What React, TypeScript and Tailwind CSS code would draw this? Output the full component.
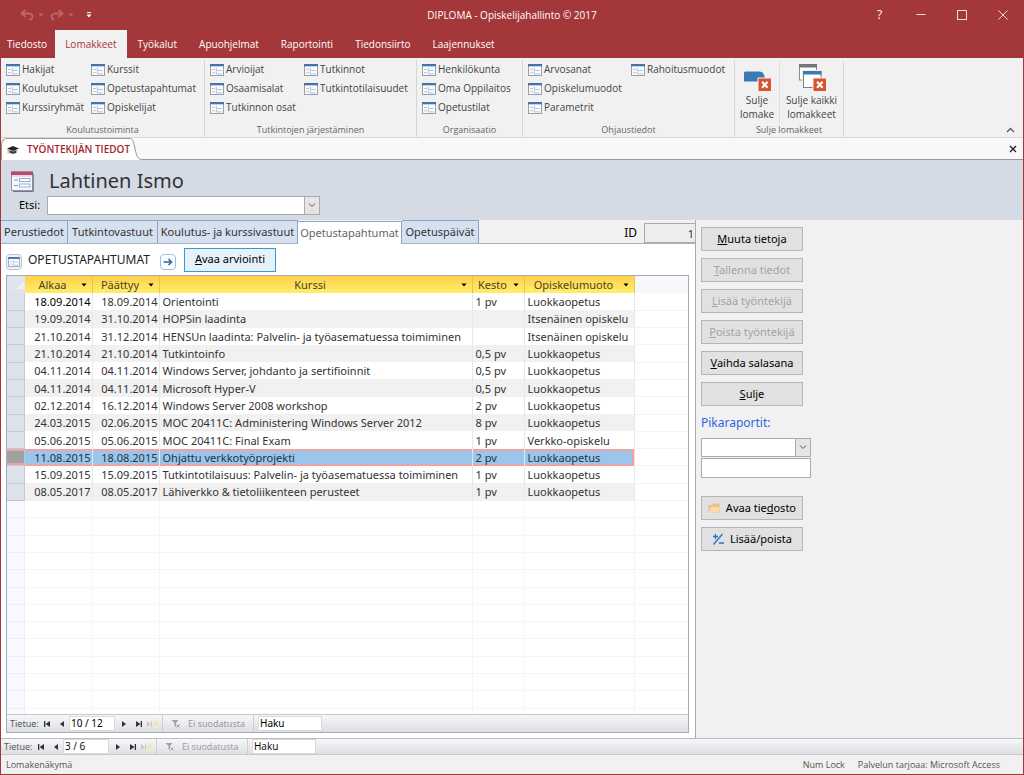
import React, { useState } from "react";
import clsx from "clsx";

///////////////////////////////////////////////////////////////////////////////
///////// Data ///////////////////////////////////////////////////////////////
///////////////////////////////////////////////////////////////////////////////

const menuTabs = [
  "Tiedosto",
  "Lomakkeet",
  "Työkalut",
  "Apuohjelmat",
  "Raportointi",
  "Tiedonsiirto",
  "Laajennukset",
];

type RibbonGroup = {
  label: string;
  width: string;
  columns: { width: string; items: string[] }[];
};

const ribbonGroups: RibbonGroup[] = [
  {
    label: "Koulutustoiminta",
    width: "w-[204px]",
    columns: [
      { width: "w-[85px]", items: ["Hakijat", "Koulutukset", "Kurssiryhmät"] },
      { width: "w-[108px]", items: ["Kurssit", "Opetustapahtumat", "Opiskelijat"] },
    ],
  },
  {
    label: "Tutkintojen järjestäminen",
    width: "w-[212px]",
    columns: [
      { width: "w-[94px]", items: ["Arvioijat", "Osaamisalat", "Tutkinnon osat"] },
      { width: "w-[108px]", items: ["Tutkinnot", "Tutkintotilaisuudet"] },
    ],
  },
  {
    label: "Organisaatio",
    width: "w-[106px]",
    columns: [
      { width: "w-[94px]", items: ["Henkilökunta", "Oma Oppilaitos", "Opetustilat"] },
    ],
  },
  {
    label: "Ohjaustiedot",
    width: "w-[212px]",
    columns: [
      { width: "w-[103px]", items: ["Arvosanat", "Opiskelumuodot", "Parametrit"] },
      { width: "w-[100px]", items: ["Rahoitusmuodot"] },
    ],
  },
];

const formTabs = [
  { label: "Perustiedot", width: "w-[67px]" },
  { label: "Tutkintovastuut", width: "w-[90px]" },
  { label: "Koulutus- ja kurssivastuut", width: "w-[140px]" },
  { label: "Opetustapahtumat", width: "w-[104px]" },
  { label: "Opetuspäivät", width: "w-[77px]" },
];

const events = [
  ["18.09.2014", "18.09.2014", "Orientointi", "1 pv", "Luokkaopetus"],
  ["19.09.2014", "31.10.2014", "HOPSin laadinta", "", "Itsenäinen opiskelu"],
  ["21.10.2014", "31.12.2014", "HENSUn laadinta: Palvelin- ja työasematuessa toimiminen", "", "Itsenäinen opiskelu"],
  ["21.10.2014", "21.10.2014", "Tutkintoinfo", "0,5 pv", "Luokkaopetus"],
  ["04.11.2014", "04.11.2014", "Windows Server, johdanto ja sertifioinnit", "0,5 pv", "Luokkaopetus"],
  ["04.11.2014", "04.11.2014", "Microsoft Hyper-V", "0,5 pv", "Luokkaopetus"],
  ["02.12.2014", "16.12.2014", "Windows Server 2008 workshop", "2 pv", "Luokkaopetus"],
  ["24.03.2015", "02.06.2015", "MOC 20411C: Administering Windows Server 2012", "8 pv", "Luokkaopetus"],
  ["05.06.2015", "05.06.2015", "MOC 20411C: Final Exam", "1 pv", "Verkko-opiskelu"],
  ["11.08.2015", "18.08.2015", "Ohjattu verkkotyöprojekti", "2 pv", "Luokkaopetus"],
  ["15.09.2015", "15.09.2015", "Tutkintotilaisuus: Palvelin- ja työasematuessa toimiminen", "1 pv", "Luokkaopetus"],
  ["08.05.2017", "08.05.2017", "Lähiverkko & tietoliikenteen perusteet", "1 pv", "Luokkaopetus"],
];

const columns = ["Alkaa", "Päättyy", "Kurssi", "Kesto", "Opiskelumuoto"];

const EMPTY_ROWS = 13;

///////////////////////////////////////////////////////////////////////////////
///////// Icons //////////////////////////////////////////////////////////////
///////////////////////////////////////////////////////////////////////////////

function FormIcon({ className = "w-[14px] h-3" }: { className?: string }) {
  return (
    <svg viewBox="0 0 14 12" className={clsx("shrink-0", className)} aria-hidden="true">
      <rect x="0.5" y="0.5" width="13" height="11" fill="#fbfbfb" stroke="#9a9fa6" />
      <rect x="0" y="0" width="14" height="2.3" fill="#4474a8" />
      <path d="M2 5.5h3M2 8.7h3" stroke="#c4c4c4" />
      <path d="M6.3 3.8v2.7h5.500M6.300 7.300v2.600h5.500" fill="none" stroke="#a9c4e6" />
    </svg>
  );
}

function HeaderFormIcon() {
  return (
    <svg viewBox="0 0 23 21" className="h-[21px] w-[23px] shrink-0" aria-hidden="true">
      <rect x="0.5" y="1" width="21" height="18.5" fill="#f4f8fd" stroke="#8d97ab" />
      <rect x="0" y="0.5" width="22" height="3.5" fill="#b8496b" />
      <path d="M1 5h20" stroke="#e7b9c8" />
      <path d="M22.3 3v17.5H2" stroke="#6f7684" fill="none" />
      <path d="M3 9h4M3 14.5h4" stroke="#7d9cc8" />
      <rect x="8.5" y="7.5" width="10.5" height="3" fill="#fff" stroke="#93aed6" />
      <rect x="8.5" y="13" width="10.5" height="3" fill="#fff" stroke="#93aed6" />
    </svg>
  );
}

function RedX({ x, y }: { x: number; y: number }) {
  return (
    <g transform={`translate(${x} ${y})`}>
      <rect x="-0.5" y="-0.5" width="14" height="14" fill="#f1f1f1" />
      <rect x="0.5" y="0.5" width="12.5" height="12.5" fill="#d9532f" />
      <path d="M4 3.7l5.6 6M9.6 3.7L4 9.7" stroke="#fff" strokeWidth="2" />
    </g>
  );
}

function CloseFormIcon() {
  return (
    <svg viewBox="0 0 30 30" className="h-[30px] w-[30px]" aria-hidden="true">
      <path d="M2 10q0-1.5 1.5-1.5H17q5 0 6 6v4H2z" fill="#3c78b8" />
      <RedX x={16} y={15} />
    </svg>
  );
}

function CloseAllIcon() {
  return (
    <svg viewBox="0 0 30 30" className="h-[30px] w-[30px]" aria-hidden="true">
      <rect x="2.5" y="1.5" width="17" height="15.5" fill="#fff" stroke="#8c8c8c" />
      <rect x="2" y="1" width="18" height="3.5" fill="#757575" />
      <rect x="5" y="7" width="20.500" height="18.500" fill="#f1f1f1" />
      <rect x="6.5" y="8.5" width="17.5" height="16" fill="#fff" stroke="#6c7f92" />
      <rect x="6" y="8" width="18.5" height="3.5" fill="#3c78b8" />
      <RedX x={16} y={15} />
    </svg>
  );
}

function CapIcon() {
  return (
    <svg viewBox="0 0 12 10" className="h-[10px] w-3 shrink-0" aria-hidden="true">
      <path d="M0 3.5L6 1l6 2.5L6 6z" fill="#222" />
      <path d="M2.5 5v2.8q3.5 2 7 0V5L6 6.5z" fill="#3a3a3a" />
      <path d="M1.2 4v4.5" stroke="#b98a2c" strokeWidth="0.9" />
    </svg>
  );
}

function ChevronDown() {
  return (
    <svg viewBox="0 0 8 5" className="h-[5px] w-2" fill="none" stroke="#555" aria-hidden="true">
      <path d="M1 0.5l3 3 3-3" />
    </svg>
  );
}

function Triangle({ className }: { className: string }) {
  return (
    <svg viewBox="0 0 6 4" className={clsx("h-1 w-1.5 shrink-0", className)} aria-hidden="true">
      <path d="M0.5 0.5h5L3 3.5z" fill="currentColor" />
    </svg>
  );
}

///////////////////////////////////////////////////////////////////////////////
///////// Window title bar + ribbon //////////////////////////////////////////
///////////////////////////////////////////////////////////////////////////////

function TitleBar() {
  return (
    <header className="grid h-[30px] shrink-0 grid-cols-[1fr_auto_1fr] items-center text-[10px] text-white">
      <div className="flex items-center pl-[19px]">
        <button aria-label="Kumoa" className="text-[#bd6569]">
          <svg viewBox="0 0 14 12" className="h-3 w-[14px]" fill="none" stroke="currentColor" strokeWidth="1.8">
            <path d="M5.500 1L1.500 4.500l4 3.500M2 4.500h6c3 0 4.500 1.500 4.500 3.200 0 1.800-1.300 2.800-3 2.800" />
          </svg>
        </button>
        <Triangle className="ml-1 text-[#bd6569]" />
        <button aria-label="Tee uudelleen" className="ml-1.5 text-[#bd6569]">
          <svg viewBox="0 0 14 12" className="h-3 w-[14px]" fill="none" stroke="currentColor" strokeWidth="1.8">
            <path d="M8.500 1l4 3.500-4 3.500M12 4.500H6c-3 0-4.500 1.500-4.500 3.200 0 1.800 1.300 2.800 3 2.800" />
          </svg>
        </button>
        <Triangle className="ml-1 text-[#bd6569]" />
        <button aria-label="Mukauta työkaluriviä" className="ml-3">
          <svg viewBox="0 0 6 6" className="h-1.5 w-1.5" aria-hidden="true">
            <path d="M1 0.6h4" stroke="#fff" />
            <path d="M0.5 2.5h5L3 5.5z" fill="#fff" />
          </svg>
        </button>
      </div>
      <h1>DIPLOMA - Opiskelijahallinto © 2017</h1>
      <div className="flex justify-end">
        <button className="flex h-7 w-[41px] items-center justify-center text-xs">?</button>
        <button aria-label="Pienennä" className="flex h-7 w-[41px] items-center justify-center">
          <svg viewBox="0 0 10 10" className="size-2.5" stroke="#f3dcdc">
            <path d="M0.5 4.5h9" />
          </svg>
        </button>
        <button aria-label="Suurenna" className="flex h-7 w-[41px] items-center justify-center">
          <svg viewBox="0 0 10 10" className="size-2.5" stroke="#f3dcdc" fill="none">
            <rect x="0.5" y="0.5" width="9" height="9" />
          </svg>
        </button>
        <button aria-label="Sulje ikkuna" className="flex h-7 w-[41px] items-center justify-center">
          <svg viewBox="0 0 10 10" className="size-2.5" stroke="#f3dcdc">
            <path d="M0.5 0.5l9 9M9.5 0.5l-9 9" />
          </svg>
        </button>
      </div>
    </header>
  );
}

function Ribbon() {
  return (
    <>
      <nav className="flex h-7 shrink-0 text-[10px]">
        {menuTabs.map((tab) => (
          <button
            key={tab}
            className={clsx(
              "h-full",
              tab === "Tiedosto" && "pr-2 pl-1.5 text-white",
              tab === "Lomakkeet" && "bg-[#f1f1f1] px-2.5 text-[#a4373a]",
              tab !== "Tiedosto" && tab !== "Lomakkeet" && "px-[11px] text-white",
            )}
          >
            {tab}
          </button>
        ))}
      </nav>

      <div className="flex h-20 shrink-0 border-b border-[#d8d8d8] bg-[#f1f1f1] text-[10px] text-[#444]">
        {ribbonGroups.map((group) => (
          <section
            key={group.label}
            className={clsx("flex shrink-0 flex-col pt-0.5", group.width)}
          >
            <div className="flex grow border-r border-[#d5d5d5] pl-[5px]">
              {group.columns.map((col, i) => (
                <ul key={i} className={col.width}>
                  {col.items.map((item) => (
                    <li key={item}>
                      <button className="flex h-[19px] items-center gap-0.5 whitespace-nowrap">
                        <FormIcon />
                        {item}
                      </button>
                    </li>
                  ))}
                </ul>
              ))}
            </div>
            <h2 className="h-[14px] border-r border-[#d5d5d5] text-center text-[9px] leading-[14px] text-[#666]">
              {group.label}
            </h2>
          </section>
        ))}

        <section className="flex w-[109px] shrink-0 flex-col pt-[3px]">
          <div className="flex grow border-r border-[#d5d5d5]">
            <button className="flex w-[45px] flex-col items-center border-r border-[#dedede] pt-0.5 leading-[14px]">
              <CloseFormIcon />
              <span>Sulje</span>
              <span>lomake</span>
            </button>
            <button className="flex grow flex-col items-center pt-0.5 leading-[14px]">
              <CloseAllIcon />
              <span>Sulje kaikki</span>
              <span>lomakkeet</span>
            </button>
          </div>
          <h2 className="h-[14px] border-r border-[#d5d5d5] text-center text-[9px] leading-[14px] text-[#666]">
            Sulje lomakkeet
          </h2>
        </section>

        <button aria-label="Kutista valintanauha" className="mt-auto mr-2 mb-1 ml-auto">
          <svg viewBox="0 0 9 6" className="h-1.5 w-[9px]" fill="none" stroke="#555" strokeWidth="1.3">
            <path d="M1 5l3.5-3.5L8 5" />
          </svg>
        </button>
      </div>
    </>
  );
}

function DocumentTabs() {
  return (
    <div className="flex h-[22px] shrink-0 bg-[#f8f8f8] text-[10px] font-semibold text-[#a4262c]">
      <button className="flex items-center gap-2 rounded-tl-md border-t border-l border-[#999] bg-white pl-[5px] whitespace-nowrap">
        <CapIcon />
        TYÖNTEKIJÄN TIEDOT
      </button>
      <svg viewBox="0 0 12 22" className="h-[22px] w-3 shrink-0" aria-hidden="true">
        <path d="M0 0.5c2 0 3 2 4 6l2.5 10q1.2 5 5.5 5V22H0z" fill="#fff" />
        <path d="M0 0.5c2 0 3 2 4 6l2.5 10q1.2 5 5.5 5" fill="none" stroke="#999" />
      </svg>
      <div className="flex grow items-center justify-end border-b border-[#999] pr-1.5">
        <button aria-label="Sulje välilehti">
          <svg viewBox="0 0 8 8" className="size-2" stroke="#222" strokeWidth="1.4">
            <path d="M1 1l6 6M7 1L1 7" />
          </svg>
        </button>
      </div>
    </div>
  );
}

///////////////////////////////////////////////////////////////////////////////
///////// Shared form controls ///////////////////////////////////////////////
///////////////////////////////////////////////////////////////////////////////

function Combo({ id, className }: { id: string; className: string }) {
  return (
    <div className={clsx("relative h-[19px]", className)}>
      <select
        id={id}
        className="size-full appearance-none border border-[#ababab] bg-white px-1"
      >
        <option value=""></option>
      </select>
      <span className="pointer-events-none absolute inset-y-0 right-0 flex w-4 items-center justify-center border border-[#ababab] bg-[#e5e5e5]">
        <ChevronDown />
      </span>
    </div>
  );
}

function NavArrow({ label, d, muted }: { label: string; d: string; muted?: boolean }) {
  return (
    <button aria-label={label} className="flex h-full w-[15px] items-center justify-center">
      <svg viewBox="0 0 12 8" className="h-2 w-3" aria-hidden="true">
        <path d={d} fill={muted ? "#c9c9c2" : "#333"} />
        {muted && (
          <>
            <rect x="6" y="0.5" width="5.5" height="7" fill="#f3ecd0" />
            <path d="M8.700 1v6M6.500 4h5" stroke="#eee0ae" />
          </>
        )}
      </svg>
    </button>
  );
}

function RecordNav({ id, value, total }: { id: string; value: number; total: number }) {
  return (
    <div className="flex h-full items-center text-[9px] text-[#555]">
      <label htmlFor={`${id}-pos`} className="w-8 pl-[3px]">
        Tietue:
      </label>
      <NavArrow label="Ensimmäinen" d="M3 1h1.300v6H3zM9 1v6L4.500 4z" />
      <NavArrow label="Edellinen" d="M8 1v6L4 4z" />
      <input
        id={`${id}-pos`}
        defaultValue={`${value} / ${total}`}
        className="h-[15px] w-[46px] border border-[#dadada] bg-white px-px text-[10px] text-black"
      />
      <NavArrow label="Seuraava" d="M5 1v6l4-3z" />
      <NavArrow label="Viimeinen" d="M4 1v6l4.500-3zM8.700 1H10v6H8.700z" />
      <NavArrow label="Uusi" d="M0 1v6l3.500-3zM4 1h1v6H4z" muted />
      <button
        disabled
        className="ml-0.5 flex h-full w-[92px] items-center gap-2 border-x border-[#cfcfcf] pl-2 whitespace-nowrap text-[#999]"
      >
        <svg viewBox="0 0 9 9" className="size-[9px] shrink-0" aria-hidden="true">
          <path d="M0.5 1h7L5 4v4L3.5 7V4z" fill="#a3a3a3" />
          <path d="M5.5 5.5l3 3M8.5 5.5l-3 3" stroke="#a3a3a3" />
        </svg>
        Ei suodatusta
      </button>
      <input
        aria-label="Haku"
        defaultValue="Haku"
        className="ml-1 h-[15px] w-16 border border-[#dadada] bg-white px-px text-[10px] text-black"
      />
    </div>
  );
}

function SideButton({
  text,
  accessKey,
  disabled,
  icon,
  className,
}: {
  text: string;
  accessKey?: string;
  disabled?: boolean;
  icon?: React.ReactNode;
  className?: string;
}) {
  const at = accessKey ? text.indexOf(accessKey) : -1;
  return (
    <button
      disabled={disabled}
      className={clsx(
        "flex h-6 w-[102px] shrink-0 items-center justify-center gap-1.5 border border-[#b5b5b5] bg-[#e1e1e1] whitespace-nowrap",
        disabled ? "text-[#a3a3a3]" : "text-black",
        className,
      )}
    >
      {icon}
      {at < 0 ? (
        text
      ) : (
        <span>
          {text.slice(0, at)}
          <u>{text[at]}</u>
          {text.slice(at + 1)}
        </span>
      )}
    </button>
  );
}

///////////////////////////////////////////////////////////////////////////////
///////// Teaching events datasheet //////////////////////////////////////////
///////////////////////////////////////////////////////////////////////////////

function Datasheet() {
  const [current, setCurrent] = useState(9);

  return (
    <div className="mr-[6px] mb-[5px] ml-[5px] flex min-h-0 grow flex-col border border-[#a5acb8]">
      <div className="min-h-0 grow basis-0 overflow-hidden">
        <table className="h-[450px] w-full table-fixed border-collapse text-[11px] leading-[15px] text-[#333]">
          <colgroup>
            <col className="w-[17px]" />
            <col className="w-[68px]" />
            <col className="w-[67px]" />
            <col className="w-[313px]" />
            <col className="w-[52px]" />
            <col className="w-[110px]" />
            <col />
          </colgroup>
          <thead>
            <tr className="h-[17px]">
              <th className="border-r border-[#e4e8f0] bg-[#dfe5ef] p-0">
                <svg viewBox="0 0 8 8" className="ml-auto size-2" aria-label="Valitse kaikki">
                  <path d="M8 0v8H0z" fill="#eceff5" />
                </svg>
              </th>
              {columns.map((name) => (
                <th
                  key={name}
                  className="border-r border-[#e3c455] bg-linear-to-b from-[#ffd04a] to-[#ffee68] p-0 font-normal text-[#4a4326]"
                >
                  <div className="flex items-center pr-[5px]">
                    <span className="grow text-center">{name}</span>
                    <Triangle className="text-black" />
                  </div>
                </th>
              ))}
              <th className="bg-[#f7f8fe] p-0" />
            </tr>
          </thead>
          <tbody>
            {events.map((row, i) => {
              const selected = i === current;
              return (
                <tr
                  key={i}
                  onClick={() => setCurrent(i)}
                  className={clsx("h-[17px]", i % 2 ? "bg-[#f1f1f1]" : "bg-white")}
                >
                  <th
                    className={clsx(
                      "border-r border-b border-[#c3c9d3] p-0",
                      selected
                        ? "bg-[#a0a0a0] shadow-[inset_0_2px_0_#f0a3a3,inset_0_-2px_0_#f0a3a3]"
                        : "bg-[#dde2ea]",
                    )}
                  />
                  {row.map((cell, c) => (
                    <td
                      key={c}
                      className={clsx(
                        "overflow-hidden border-r border-[#e6e8ec] py-0 whitespace-nowrap",
                        c < 2 ? "pr-px text-right" : "pl-[3px]",
                        i === 0 && c === 0 && "text-black",
                        selected && "bg-[#9bc5ea] text-[#1f3347]",
                        selected &&
                          (c === row.length - 1
                            ? "shadow-[inset_0_2px_0_#f0a3a3,inset_-2px_-2px_0_#f0a3a3]"
                            : "shadow-[inset_0_2px_0_#f0a3a3,inset_0_-2px_0_#f0a3a3]"),
                      )}
                    >
                      {cell}
                    </td>
                  ))}
                  <td className="border-b border-[#f2f3f7] bg-white p-0" />
                </tr>
              );
            })}
            {Array.from({ length: EMPTY_ROWS }, (_, i) => (
              <tr key={i} className="h-[17px]">
                <th className="border-r border-b border-[#eeeef8] bg-[#f8f8fe] p-0" />
                {columns.map((name) => (
                  <td key={name} className="border-r border-b border-[#f5f5f8] p-0" />
                ))}
                <td className="border-b border-[#f5f5f8] p-0" />
              </tr>
            ))}
          </tbody>
        </table>
      </div>
      <div className="h-[18px] shrink-0 border-t border-[#c4c8cf] bg-linear-to-b from-[#f6f7f9] to-[#dddfe3]">
        <RecordNav id="events" value={10} total={12} />
      </div>
    </div>
  );
}

///////////////////////////////////////////////////////////////////////////////
///////// Employee form //////////////////////////////////////////////////////
///////////////////////////////////////////////////////////////////////////////

function EmployeeForm() {
  return (
    <main className="flex min-h-0 grow flex-col bg-[#f1f1f1] font-['Noto_Sans',sans-serif] text-[11px] text-[#333]">
      <div className="flex h-[60px] shrink-0 flex-col bg-[#d5dbe5] pt-1.5">
        <div className="flex h-[30px] items-center gap-[15px] pl-[10px]">
          <HeaderFormIcon />
          <h2 className="text-xl leading-7">Lahtinen Ismo</h2>
        </div>
        <div className="flex items-center pl-[18px]">
          <label htmlFor="etsi" className="w-7 text-[11px] text-black">
            Etsi:
          </label>
          <Combo id="etsi" className="w-[273px]" />
        </div>
      </div>

      <div className="flex min-h-0 grow">
        <div className="flex w-[68%] shrink-0 flex-col border-r border-[#a3aabb]">
          <div className="flex h-6 shrink-0 items-end border-b border-[#a3b0c8]">
            {formTabs.map((tab) => {
              const active = tab.label === "Opetustapahtumat";
              return (
                <button
                  key={tab.label}
                  className={clsx(
                    "h-[23px] shrink-0 border-t border-r border-[#8fa3c4] whitespace-nowrap",
                    tab.width,
                    active ? "-mb-px h-6 bg-white text-[#666]" : "bg-[#d6e1f0] text-[#333]",
                  )}
                >
                  {tab.label}
                </button>
              );
            })}
            <label htmlFor="emp-id" className="mr-[7px] mb-0.5 ml-auto text-xs text-black">
              ID
            </label>
            <input
              id="emp-id"
              readOnly
              value="1"
              className="h-5 w-[51px] border border-r-0 border-[#ababab] bg-[#ededed] px-px text-right"
            />
          </div>

          <div className="flex min-h-0 grow flex-col bg-white">
            <div className="flex h-[31px] shrink-0 items-center pl-[5px]">
              <span className="mt-1 flex size-4 items-center justify-center rounded-sm border border-[#b9c6da] bg-[#eef4fb]">
                <FormIcon className="h-[10px] w-3" />
              </span>
              <h3 className="ml-[6px] w-[132px] text-xs text-[#222]">OPETUSTAPAHTUMAT</h3>
              <button
                aria-label="Siirry"
                className="mt-1 flex size-4 items-center justify-center rounded-sm border border-[#9dbbe0] bg-white"
              >
                <svg viewBox="0 0 10 8" className="h-2 w-2.5" fill="none" stroke="#2a66ab" strokeWidth="1.6">
                  <path d="M0.5 4h8M5.5 1l3 3-3 3" />
                </svg>
              </button>
              <button className="ml-2 h-6 w-[92px] border border-[#3c96dc] bg-[#e5f1fb] text-black">
                <u>A</u>vaa arviointi
              </button>
            </div>
            <Datasheet />
          </div>
        </div>

        <aside className="flex min-w-[120px] grow flex-col pt-[7px] pl-[5px]">
          <div className="flex flex-col gap-[7px]">
            <SideButton text="Muuta tietoja" accessKey="M" />
            <SideButton text="Tallenna tiedot" accessKey="T" disabled />
            <SideButton text="Lisää työntekijä" accessKey="L" disabled />
            <SideButton text="Poista työntekijä" accessKey="P" disabled />
            <SideButton text="Vaihda salasana" accessKey="V" />
            <SideButton text="Sulje" accessKey="S" />
          </div>
          <label htmlFor="reports" className="mt-[7px] text-xs leading-5 text-[#2a66dc]">
            Pikaraportit:
          </label>
          <Combo id="reports" className="mt-[5px] w-[110px]" />
          <input
            aria-label="Raportin hakuehto"
            className="mt-px h-5 w-[110px] border border-[#ababab] bg-white px-1"
          />
          <SideButton
            text="Avaa tiedosto"
            accessKey="d"
            className="mt-[18px]"
            icon={
              <svg viewBox="0 0 12 10" className="h-2.5 w-3" aria-hidden="true">
                <path d="M0.5 9.500V2h4l1-1.500h6v9z" fill="#eabf86" />
                <path d="M1 9.500l1.500-5.500h9.300L10.500 9.500z" fill="#fbdba8" />
              </svg>
            }
          />
          <SideButton
            text="Lisää/poista"
            className="mt-[7px]"
            icon={
              <svg viewBox="0 0 12 12" className="size-3" fill="none" stroke="#2f6fc4" strokeWidth="1.3">
                <path d="M3.5 1v5M1 3.5h5M7 10h5M1.5 11.5L10.5 1" />
              </svg>
            }
          />
        </aside>
      </div>
    </main>
  );
}

export default function App() {
  return (
    <div className="flex h-screen min-h-[640px] min-w-[860px] flex-col border-x border-b border-[#a4373a] bg-[#a4373a] font-['Open_Sans',sans-serif]">
      <TitleBar />
      <Ribbon />
      <DocumentTabs />
      <EmployeeForm />

      {/* Record navigation of the outer form */}
      <div className="h-4 shrink-0 border-t border-[#b8bcc4] bg-linear-to-b from-[#f6f7f9] to-[#dddfe3]">
        <RecordNav id="employees" value={3} total={6} />
      </div>

      <footer className="flex h-5 shrink-0 items-center border-t border-[#c8c8c8] bg-[#f1f1f1] px-[5px] text-[9px] text-[#555]">
        <span>Lomakenäkymä</span>
        <span className="ml-auto">Num Lock</span>
        <span className="mr-[18px] ml-[13px]">Palvelun tarjoaa: Microsoft Access</span>
      </footer>
    </div>
  );
}
